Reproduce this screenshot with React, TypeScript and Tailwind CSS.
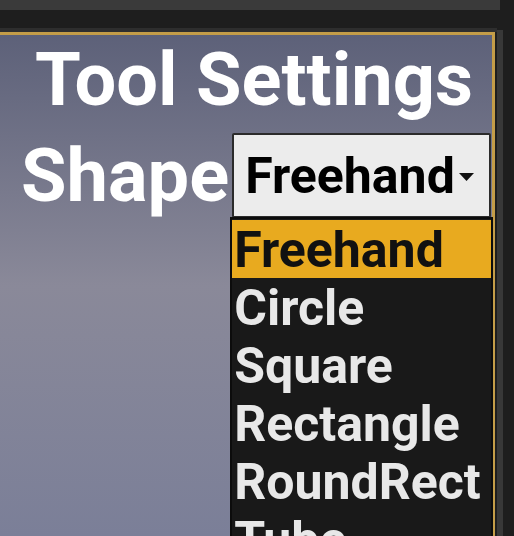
import React from 'react';

const shapes = ['Freehand', 'Circle', 'Square', 'Rectangle', 'RoundRect', 'Tube', 'Polygon'];

const App: React.FC = () => {
  const selected = 'Freehand';

  return (
    <div className="w-[514px] h-[536px] bg-[#1e1e1e] overflow-hidden flex font-['Roboto',sans-serif]">
      {/* Left column */}
      <div className="w-[497px] flex flex-col">
        <div className="h-[10px] bg-[#3a3a3a] mr-[-3px]" />
        <div className="h-[18px]" />
        <div className="h-[4px] bg-[#2e2e2e]" />

        {/* Tool settings panel */}
        <div className="relative flex-1 w-[495px] border-t-[3px] border-r-[3px] border-[#c49d48] bg-gradient-to-b from-[#5d6179] via-[#8a8999] to-[#7b7f98]">
          <div className="pt-[8px] pr-[19px] text-right text-white font-bold text-[74px] leading-none">
            Tool Settings
          </div>

          <div className="flex items-center mt-[16px] pl-[21px]">
            <span className="text-white font-bold text-[74px] leading-none">Shape</span>

            <div className="relative ml-[3px]">
              <button className="w-[259px] h-[85px] bg-[#ececec] border-2 border-[#2b2b2b] rounded-[2px] flex items-center pl-[11px] text-black font-bold text-[50px] leading-none">
                Freehand
                <svg width="15" height="8" viewBox="0 0 15 8" className="ml-[4px] mt-[2px]">
                  <path d="M0 0 H15 L7.5 8 Z" fill="#111" />
                </svg>
              </button>

              {/* Dropdown menu */}
              <div className="absolute left-[-2px] top-[84px] w-[263px] pt-[1px] bg-[#191919] border-2 border-[#0c0c0c]">
                {shapes.map(s => (
                  <div
                    key={s}
                    className={
                      s === selected
                        ? 'h-[58px] pl-[2px] bg-[#e8aa1f] text-[#111] font-bold text-[50px] leading-[60px]'
                        : 'h-[58px] pl-[2px] text-[#e8e8e8] font-bold text-[50px] leading-[60px]'
                    }
                  >
                    {s}
                  </div>
                ))}
              </div>
            </div>
          </div>
        </div>
      </div>

      {/* Right scroll column */}
      <div className="flex-1 flex">
        <div className="w-[6px] mt-[30px] bg-[#383838]" />
      </div>
    </div>
  );
};

export default App;
